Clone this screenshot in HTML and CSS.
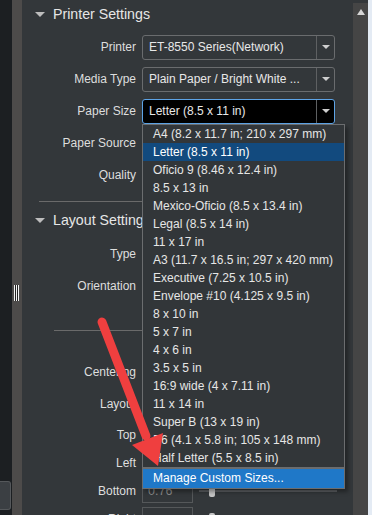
FILE: index.html
```html
<!DOCTYPE html>
<html lang="en">
<head>
  <meta charset="UTF-8">
  <title>Printer Settings</title>
  <link rel="stylesheet" href="styles.css">
</head>
<body>
  <div class="window">
    <div class="edge">
      <div class="edge-box"></div>
    </div>
    <div class="splitter">
      <div class="grip"></div>
    </div>

    <div class="panel">
      <div class="section-head"><span class="caret"></span>Printer Settings</div>

      <div class="row">
        <label>Printer</label>
        <div class="select"><span class="value">ET-8550 Series(Network)</span><span class="drop"></span></div>
      </div>
      <div class="row">
        <label>Media Type</label>
        <div class="select"><span class="value">Plain Paper / Bright White ...</span><span class="drop"></span></div>
      </div>
      <div class="row">
        <label>Paper Size</label>
        <div class="select open"><span class="value">Letter (8.5 x 11 in)</span><span class="drop"></span></div>
      </div>
      <div class="row">
        <label>Paper Source</label>
      </div>
      <div class="row">
        <label>Quality</label>
      </div>

      <hr class="divider">

      <div class="section-head layout-head"><span class="caret"></span>Layout Settings</div>
      <div class="row">
        <label>Type</label>
      </div>
      <div class="row">
        <label>Orientation</label>
      </div>

      <hr class="divider inner">

      <div class="row centering">
        <label>Centering</label>
      </div>
      <div class="row">
        <label>Layout</label>
      </div>
      <div class="row short top-row">
        <label>Top</label>
      </div>
      <div class="row short">
        <label>Left</label>
      </div>
      <div class="row short">
        <label>Bottom</label>
        <div class="field">0.76</div>
        <div class="slider"><span class="thumb"></span></div>
      </div>
      <div class="row short">
        <label>Right</label>
        <div class="field"></div>
        <div class="slider"><span class="thumb"></span></div>
      </div>

      <!-- open Paper Size list, drawn over the form -->
      <ul class="size-list">
        <li>A4 (8.2 x 11.7 in; 210 x 297 mm)</li>
        <li class="current">Letter (8.5 x 11 in)</li>
        <li>Oficio 9 (8.46 x 12.4 in)</li>
        <li>8.5 x 13 in</li>
        <li>Mexico-Oficio (8.5 x 13.4 in)</li>
        <li>Legal (8.5 x 14 in)</li>
        <li>11 x 17 in</li>
        <li>A3 (11.7 x 16.5 in; 297 x 420 mm)</li>
        <li>Executive (7.25 x 10.5 in)</li>
        <li>Envelope #10 (4.125 x 9.5 in)</li>
        <li>8 x 10 in</li>
        <li>5 x 7 in</li>
        <li>4 x 6 in</li>
        <li>3.5 x 5 in</li>
        <li>16:9 wide (4 x 7.11 in)</li>
        <li>11 x 14 in</li>
        <li>Super B (13 x 19 in)</li>
        <li>B6 (4.1 x 5.8 in; 105 x 148 mm)</li>
        <li>Half Letter (5.5 x 8.5 in)</li>
        <li class="manage">Manage Custom Sizes...</li>
      </ul>
    </div>

    <div class="scrollbar">
      <span class="scroll-up"></span>
    </div>
    <div class="rim"></div>

    <!-- red annotation arrow -->
    <svg class="pointer" width="372" height="515" viewBox="0 0 372 515">
      <line x1="102" y1="322" x2="146" y2="436" stroke="#ef3f3f" stroke-width="9" stroke-linecap="round"/>
      <polygon points="132,445 163,433 158,466" fill="#ef3f3f"/>
    </svg>
  </div>
</body>
</html>
```

FILE: styles.css
```css
body {
  margin: 0;
  font-family: "Liberation Sans", Arial, sans-serif;
  background-color: #33373a;
}
.window {
  position: relative;
  display: flex;
  width: 372px;
  height: 515px;
  overflow: hidden;
}
.edge {
  width: 12px;
  background-color: #1c1f22;
  display: flex;
  flex-direction: column;
}
.edge-box {
  margin-top: 481px;
  height: 27px;
  width: 10px;
  background-color: #3b3f43;
  border: 1px solid #55585b;
  border-left: none;
  border-radius: 0 3px 3px 0;
}
.splitter {
  width: 10px;
  background-color: #4d4b4a;
}
.grip {
  margin: 285px 0 0 2px;
  width: 5px;
  height: 16px;
  background: repeating-linear-gradient(90deg, #f2f2f2 0 1px, #222 1px 2px);
}
.panel {
  position: relative;
  flex: 1;
  background-color: #33373a;
  color: #e0e0e0;
  font-size: 12px;
}
.section-head {
  display: flex;
  align-items: center;
  height: 28px;
  margin-bottom: 3px;
  padding-left: 13px;
  font-size: 14.2px;
  color: #e6e6e6;
}
.caret {
  width: 0;
  height: 0;
  border-left: 5px solid transparent;
  border-right: 5px solid transparent;
  border-top: 5px solid #bdbdbd;
  margin-right: 8px;
}
.layout-head {
  height: 36px;
  margin-bottom: 0;
}
.row {
  display: flex;
  align-items: center;
  height: 32px;
}
.row label {
  width: 114px;
  text-align: right;
  margin-right: 6px;
  color: #dedede;
}
.row.short {
  height: 28px;
}
.row.top-row {
  height: 29px;
}
.centering {
  margin-top: 25px;
}
.select {
  display: flex;
  align-items: center;
  width: 191px;
  height: 23px;
  border: 1px solid #6a6c6e;
  border-radius: 3px;
  color: #e8e8e8;
}
.select .value {
  flex: 1;
  padding-left: 6px;
  white-space: nowrap;
}
.select .drop {
  width: 17px;
  height: 100%;
  border-left: 1px solid #5e6062;
  display: flex;
  align-items: center;
  justify-content: center;
}
.select .drop::after {
  content: "";
  border-left: 4px solid transparent;
  border-right: 4px solid transparent;
  border-top: 4px solid #cfcfcf;
}
.select.open {
  background-color: #000;
  border-color: #5ea4e6;
}
.divider {
  border: none;
  border-top: 1px solid #6a6a6a;
  margin: 10px 18px 0 17px;
}
.divider.inner {
  margin: 28px 18px 0 32px;
}
.field {
  width: 44px;
  height: 22px;
  border: 1px solid #55585a;
  padding-left: 5px;
  line-height: 22px;
  color: #8c8c8c;
  font-size: 12.5px;
}
.slider {
  position: relative;
  margin-left: 6px;
  width: 138px;
  height: 2px;
  background-color: #5a5d60;
}
.thumb {
  position: absolute;
  left: 10px;
  top: -5px;
  width: 6px;
  height: 12px;
  border-radius: 2px;
  background-color: #c4c4c4;
}
.size-list {
  position: absolute;
  top: 124px;
  left: 120px;
  width: 201px;
  margin: 0;
  padding: 0;
  list-style: none;
  background-color: #323639;
  border: 1px solid #6b6d6f;
  box-shadow: 3px 3px 4px rgba(0, 0, 0, 0.35);
  color: #e6e6e6;
}
.size-list li {
  height: 18px;
  line-height: 18px;
  padding-left: 10px;
  white-space: nowrap;
}
.size-list .current {
  background-color: #124a7e;
  color: #fff;
}
.size-list .manage {
  height: 19px;
  line-height: 19px;
  border-top: 2px solid #6b6d6f;
  background-color: #1f78c8;
  color: #fff;
}
.scrollbar {
  width: 15px;
  margin-top: 3px;
  background-color: #454545;
  display: flex;
  justify-content: center;
}
.scroll-up {
  margin-top: 6px;
  width: 0;
  height: 0;
  border-left: 4px solid transparent;
  border-right: 4px solid transparent;
  border-bottom: 6px solid #d6d6d6;
}
.rim {
  width: 4px;
  background-color: #e4ebf4;
}
.pointer {
  position: absolute;
  top: 0;
  left: 0;
  pointer-events: none;
}
```
